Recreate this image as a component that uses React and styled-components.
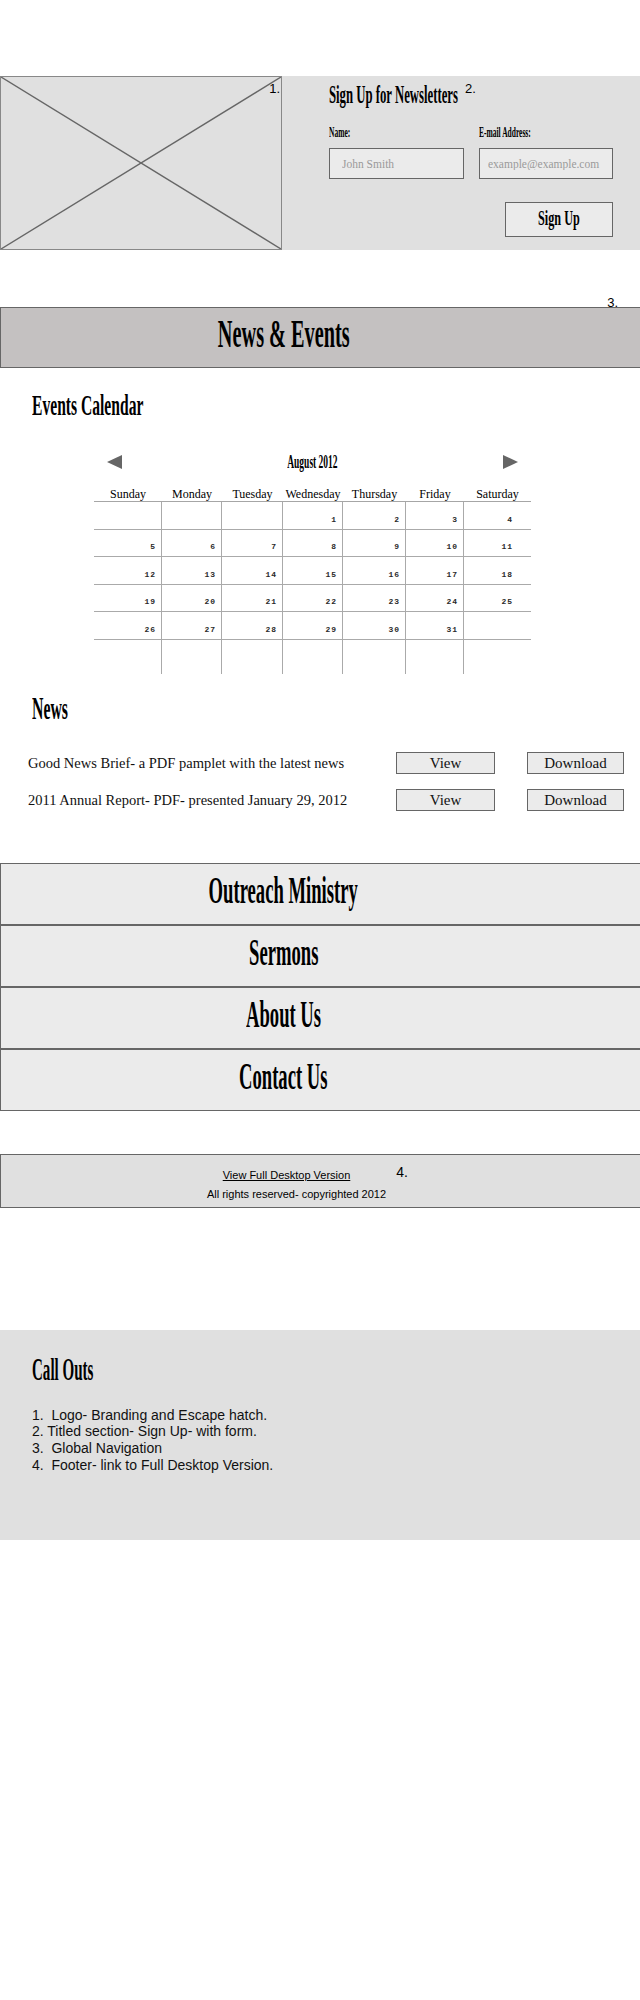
import React from "react";
import styled, { createGlobalStyle } from "styled-components";

const GlobalStyle = createGlobalStyle`
  body {
    margin: 0;
    background: #fff;
    font-family: "Liberation Serif", "Times New Roman", serif;
    color: #000;
  }
`;

const COLS = "68px 60px 61px 60px 63px 58px 67px";

const Page = styled.div`
  width: 640px;
  min-height: 2000px;
  padding-top: 76px;
  box-sizing: border-box;
  overflow: hidden;
`;

// tall condensed display face, squeezed out of Liberation Serif
const Display = styled.span`
  display: inline-block;
  font-family: "Liberation Serif", "Times New Roman", serif;
  font-weight: 700;
  font-size: ${(p) => p.$size}px;
  transform: scaleX(${(p) => p.$sx ?? 0.5});
  transform-origin: ${(p) => p.$origin ?? "center"};
  white-space: nowrap;
`;

const Marker = styled.span`
  position: absolute;
  top: ${(p) => p.$top}px;
  ${(p) => (p.$right !== undefined ? `right: ${p.$right}px;` : `left: ${p.$left};`)}
  font-family: "Liberation Sans", Arial, sans-serif;
  font-size: ${(p) => p.$size ?? 13}px;
  line-height: 15px;
  color: #000;
`;

const Header = styled.header`
  display: grid;
  grid-template-columns: 282px 1fr;
  grid-template-rows: 174px;
  height: 174px;
  background: #e0e0e0;
`;

const LogoBox = styled.div`
  position: relative;
  box-sizing: border-box;
  border: 1.5px solid #888;
  background: #e0e0e0;
  overflow: hidden;

  svg {
    position: absolute;
    top: 0;
    left: 0;
    width: 100%;
    height: 100%;
  }
`;

const SignupPanel = styled.div`
  position: relative;
  display: flex;
  flex-direction: column;
  padding: 4px 27px 0 47px;
`;

const PanelTitle = styled.div`
  line-height: 30px;
`;

const Fields = styled.div`
  display: grid;
  grid-template-columns: 135px 134px;
  column-gap: 15px;
  margin-top: 10px;
`;

const Field = styled.label`
  display: flex;
  flex-direction: column;
  line-height: 18px;
`;

const TextInput = styled.input`
  margin-top: 7px;
  width: 100%;
  height: 31px;
  box-sizing: border-box;
  border: 1.5px solid #666;
  background: #ebebeb;
  padding: 0 0 0 ${(p) => p.$indent ?? 10}px;
  font-family: "Liberation Serif", "Times New Roman", serif;
  font-size: 11.5px;
  color: #999;
  outline: none;

  &::placeholder {
    color: #9a9a9a;
  }
`;

const SignupButton = styled.button`
  align-self: flex-end;
  margin-top: 23px;
  width: 108px;
  height: 35px;
  box-sizing: border-box;
  border: 1.5px solid #666;
  background: #ebebeb;
  padding: 0;
  line-height: 30px;
  cursor: pointer;
`;

const Banner = styled.div`
  position: relative;
  margin-top: 57px;
  height: 61px;
  box-sizing: border-box;
  border: 1.5px solid #666;
  border-right: none;
  background: #c4c1c1;
  padding-right: 74px;
  text-align: center;
  line-height: 52px;
`;

const SectionTitle = styled.h2`
  margin: ${(p) => p.$mt}px 0 0 32px;
  font-weight: normal;
  font-size: inherit;
  line-height: 34px;
  height: 36px;
`;

const Calendar = styled.div`
  margin: 28px 0 0 94px;
  width: 437px;
`;

const MonthBar = styled.div`
  display: flex;
  justify-content: space-between;
  align-items: center;
  padding: 0 13px;
  height: 20px;
  line-height: 20px;

  svg {
    display: block;
  }
`;

const DayHeads = styled.div`
  display: grid;
  grid-template-columns: ${COLS};
  margin-top: 16px;
  height: 13px;
  line-height: 13px;
  font-size: 12px;
  text-align: center;
`;

const Grid = styled.div`
  display: grid;
  grid-template-columns: ${COLS};
  border-top: 1px solid #a6a6a6;
`;

const Cell = styled.div`
  height: ${(p) => (p.$lastRow ? 34 : 27.5)}px;
  box-sizing: border-box;
  border-right: ${(p) => (p.$edge ? "none" : "1px solid #aaa")};
  border-bottom: ${(p) => (p.$lastRow ? "none" : "1px solid #aaa")};
  display: flex;
  align-items: flex-end;
  justify-content: flex-end;
  padding: 0 ${(p) => (p.$edge ? 18 : 5)}px 4px 0;
  font-family: "Liberation Mono", "Courier New", monospace;
  font-weight: 700;
  font-size: 8px;
  letter-spacing: 1px;
  line-height: 10px;
  color: #2a2a2a;
`;

const DocList = styled.div`
  margin-top: 24px;
  display: flex;
  flex-direction: column;
  gap: 15px;
`;

const DocRow = styled.div`
  display: grid;
  grid-template-columns: 1fr 99px 97px;
  column-gap: 32px;
  align-items: center;
  padding: 0 16px 0 28px;
  height: 22px;
`;

const DocTitle = styled.span`
  font-size: 14.5px;
  line-height: 22px;
  white-space: nowrap;
  color: #111;
`;

const DocButton = styled.button`
  height: 22px;
  box-sizing: border-box;
  border: 1px solid #666;
  background: #ebebeb;
  padding: 0;
  font-family: "Liberation Serif", "Times New Roman", serif;
  font-size: 15px;
  line-height: 20px;
  color: #111;
  cursor: pointer;
`;

const Nav = styled.nav`
  margin-top: 52px;
`;

const NavItem = styled.a`
  display: block;
  height: 62px;
  box-sizing: border-box;
  border: 1px solid #666;
  border-right: none;
  background: #ebebeb;
  padding-right: 74px;
  text-align: center;
  line-height: 52px;
  color: #000;
  text-decoration: none;
`;

const Footer = styled.footer`
  margin-top: 43px;
  height: 54px;
  box-sizing: border-box;
  border: 1.5px solid #666;
  border-right: none;
  background: #e0e0e0;
  padding: 11px 48px 0 0;
  text-align: center;
  font-family: "Liberation Sans", Arial, sans-serif;
  font-size: 11px;
  line-height: 19px;
`;

const DesktopLink = styled.a`
  position: relative;
  display: inline-block;
  margin-right: 20px;
  color: #000;
  text-decoration: underline;
`;

const Callouts = styled.section`
  margin-top: 122px;
  background: #e0e0e0;
  padding: 21px 32px 67px;
`;

const CalloutTitle = styled.h2`
  margin: 0;
  font-weight: normal;
  font-size: inherit;
  line-height: 36px;
  height: 36px;
`;

const CalloutList = styled.div`
  margin-top: 20px;
  font-family: "Liberation Sans", Arial, sans-serif;
  font-size: 14px;
  line-height: 16.7px;
  color: #111;
  white-space: pre;
`;

const days = ["Sunday", "Monday", "Tuesday", "Wednesday", "Thursday", "Friday", "Saturday"];

const weeks = [
  ["", "", "", 1, 2, 3, 4],
  [5, 6, 7, 8, 9, 10, 11],
  [12, 13, 14, 15, 16, 17, 18],
  [19, 20, 21, 22, 23, 24, 25],
  [26, 27, 28, 29, 30, 31, ""],
  ["", "", "", "", "", "", ""],
];

const docs = [
  "Good News Brief- a PDF pamplet with the latest news",
  "2011 Annual Report- PDF- presented January 29, 2012",
];

const navLinks = ["Outreach Ministry", "Sermons", "About Us", "Contact Us"];

const callouts = [
  "1.  Logo- Branding and Escape hatch.",
  "2. Titled section- Sign Up- with form.",
  "3.  Global Navigation",
  "4.  Footer- link to Full Desktop Version.",
];

const Arrow = ({ dir }) => (
  <svg width="15" height="14" viewBox="0 0 15 14">
    <polygon
      points={dir === "left" ? "15,0 15,14 0,7" : "0,0 0,14 15,7"}
      fill="#666"
    />
  </svg>
);

export default function App() {
  return (
    <Page>
      <GlobalStyle />

      <Header>
        <LogoBox>
          <svg viewBox="0 0 100 100" preserveAspectRatio="none">
            <line x1="0" y1="0" x2="100" y2="100" stroke="#666" strokeWidth="1.4" vectorEffect="non-scaling-stroke" />
            <line x1="0" y1="100" x2="100" y2="0" stroke="#666" strokeWidth="1.4" vectorEffect="non-scaling-stroke" />
          </svg>
          <Marker $top={4} $right={1}>1.</Marker>
        </LogoBox>

        <SignupPanel>
          <PanelTitle>
            <Display $size={26} $sx={0.49} $origin="left">Sign Up for Newsletters</Display>
          </PanelTitle>
          <Marker $top={5} $left="183px">2.</Marker>
          <Fields>
            <Field>
              <Display $size={15} $origin="left">Name:</Display>
              <TextInput placeholder="John Smith" $indent={12} />
            </Field>
            <Field>
              <Display $size={15} $origin="left">E-mail Address:</Display>
              <TextInput placeholder="example@example.com" $indent={8} />
            </Field>
          </Fields>
          <SignupButton>
            <Display $size={21} $sx={0.58}>Sign Up</Display>
          </SignupButton>
        </SignupPanel>
      </Header>

      <Banner>
        <Display $size={39} $sx={0.52}>News &amp; Events</Display>
        <Marker $top={-13} $right={22}>3.</Marker>
      </Banner>

      <SectionTitle $mt={20}>
        <Display $size={30} $sx={0.52} $origin="left">Events Calendar</Display>
      </SectionTitle>

      <Calendar>
        <MonthBar>
          <Arrow dir="left" />
          <Display $size={19}>August 2012</Display>
          <Arrow dir="right" />
        </MonthBar>
        <DayHeads>
          {days.map((d) => (
            <span key={d}>{d}</span>
          ))}
        </DayHeads>
        <Grid>
          {weeks.map((week, w) =>
            week.map((n, i) => (
              <Cell key={`${w}-${i}`} $edge={i === 6} $lastRow={w === weeks.length - 1}>
                {n}
              </Cell>
            ))
          )}
        </Grid>
      </Calendar>

      <SectionTitle $mt={18}>
        <Display $size={31} $sx={0.51} $origin="left">News</Display>
      </SectionTitle>

      <DocList>
        {docs.map((doc) => (
          <DocRow key={doc}>
            <DocTitle>{doc}</DocTitle>
            <DocButton>View</DocButton>
            <DocButton>Download</DocButton>
          </DocRow>
        ))}
      </DocList>

      <Nav>
        {navLinks.map((label) => (
          <NavItem key={label} href="#">
            <Display $size={38} $sx={0.49}>{label}</Display>
          </NavItem>
        ))}
      </Nav>

      <Footer>
        <DesktopLink href="#">
          View Full Desktop Version
          <Marker $top={-1} $left="calc(100% + 46px)" $size={14}>4.</Marker>
        </DesktopLink>
        <div>All rights reserved- copyrighted 2012</div>
      </Footer>

      <Callouts>
        <CalloutTitle>
          <Display $size={32} $sx={0.47} $origin="left">Call Outs</Display>
        </CalloutTitle>
        <CalloutList>
          {callouts.map((c) => (
            <div key={c}>{c}</div>
          ))}
        </CalloutList>
      </Callouts>
    </Page>
  );
}
